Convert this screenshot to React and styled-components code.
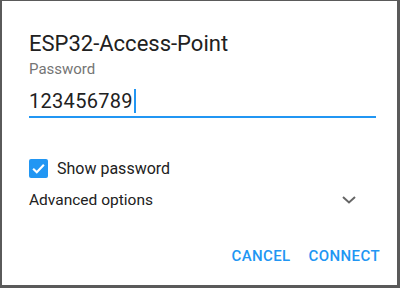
import styled, { createGlobalStyle } from "styled-components";

const GlobalStyle = createGlobalStyle`
  html, body {
    margin: 0;
    padding: 0;
    background: #fff;
  }
  body {
    font-family: Roboto, "Noto Sans", sans-serif;
  }
`;

const blue = "#2196f3";

const Frame = styled.div`
  width: 400px;
  height: 288px;
  box-sizing: border-box;
  border-style: solid;
  border-color: #5a5a5a;
  border-width: 1px 3px 3px 2px;
  background: #fff;
  display: flex;
  flex-direction: column;
  padding: 28px 21px 0 27px;
`;

const Title = styled.div`
  font-size: 22px;
  color: #212121;
  line-height: 30px;
`;

const Label = styled.div`
  font-size: 15px;
  color: #757575;
  line-height: 20px;
`;

const Field = styled.div`
  margin-top: 7px;
  border-bottom: 2px solid ${blue};
  height: 30px;
  display: flex;
  align-items: center;
  font-size: 20px;
  color: #212121;
  letter-spacing: 0.3px;
`;

const Caret = styled.span`
  display: inline-block;
  width: 2px;
  height: 24px;
  background: ${blue};
  margin-left: 1px;
`;

const CheckRow = styled.label`
  display: flex;
  align-items: center;
  margin-top: 41px;
  font-size: 16px;
  color: #212121;
  gap: 9px;
`;

const Box = styled.span`
  width: 19px;
  height: 19px;
  border-radius: 2px;
  background: ${blue};
  display: flex;
  align-items: center;
  justify-content: center;
`;

const Advanced = styled.div`
  display: flex;
  align-items: center;
  justify-content: space-between;
  margin-top: 13px;
  font-size: 15.5px;
  color: #212121;
  padding-right: 20px;
`;

const Actions = styled.div`
  margin-top: auto;
  margin-bottom: 20px;
  display: flex;
  justify-content: flex-end;
  gap: 18px;
  margin-right: -4px;
`;

const Action = styled.button`
  border: 0;
  background: none;
  padding: 0;
  font-family: inherit;
  font-size: 15px;
  font-weight: 500;
  letter-spacing: 0.4px;
  color: ${blue};
`;

export default function App() {
  return (
    <>
      <GlobalStyle />
      <Frame>
        <Title>ESP32-Access-Point</Title>
        <Label>Password</Label>
        <Field>
          123456789<Caret />
        </Field>
        <CheckRow>
          <Box>
            <svg width="15" height="15" viewBox="0 0 14 14">
              <path d="M2 7.2 L5.4 10.5 L12 3.6" fill="none" stroke="#fff" strokeWidth="2" />
            </svg>
          </Box>
          Show password
        </CheckRow>
        <Advanced>
          Advanced options
          <svg width="14" height="8" viewBox="0 0 14 8">
            <path d="M1 1 L7 6.5 L13 1" fill="none" stroke="#666" strokeWidth="2" />
          </svg>
        </Advanced>
        <Actions>
          <Action>CANCEL</Action>
          <Action>CONNECT</Action>
        </Actions>
      </Frame>
    </>
  );
}
